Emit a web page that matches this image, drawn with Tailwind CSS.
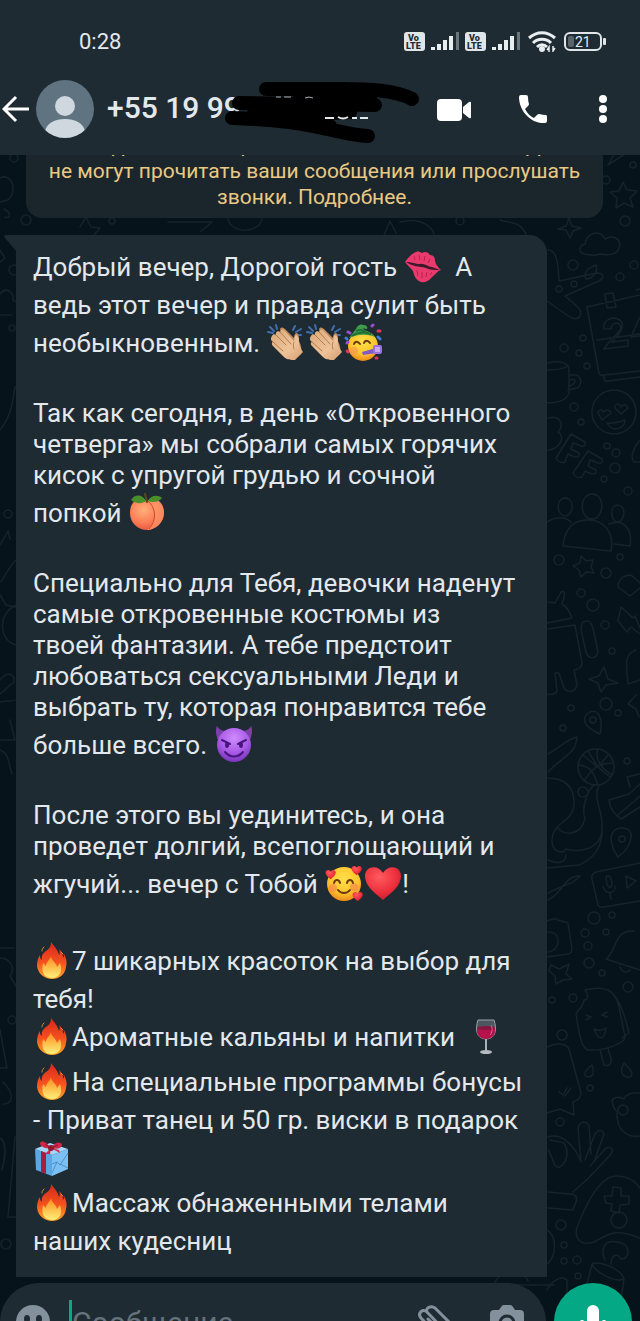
<!DOCTYPE html>
<html lang="ru">
<head>
  <meta charset="UTF-8" />
  <meta name="viewport" content="width=device-width, initial-scale=1.0" />
  <title>Чат</title>
  <script src="https://cdn.jsdelivr.net/npm/@tailwindcss/browser@4"></script>
</head>
<body class="h-screen overflow-hidden flex flex-col bg-[#07131a] text-[#e3e8ec] font-[Roboto,'Noto_Sans',sans-serif]">

  <!-- Emoji -->
  <svg class="absolute w-0 h-0" xmlns="http://www.w3.org/2000/svg">
    <defs>
      <linearGradient id="gFire" x1="0" y1="0" x2="0" y2="1">
        <stop offset="0" stop-color="#d8261c" /><stop offset=".55" stop-color="#f4511e" /><stop offset="1" stop-color="#ffa726" />
      </linearGradient>
      <linearGradient id="gFlame" x1="0" y1="0" x2="0" y2="1">
        <stop offset="0" stop-color="#ff8a1c" /><stop offset="1" stop-color="#fff07a" />
      </linearGradient>
      <radialGradient id="gFace" cx=".5" cy=".35" r=".65">
        <stop offset="0" stop-color="#ffe04a" /><stop offset=".65" stop-color="#fdc52c" /><stop offset="1" stop-color="#ee8a1a" />
      </radialGradient>
      <radialGradient id="gDevil" cx=".5" cy=".3" r=".7">
        <stop offset="0" stop-color="#cf8bff" /><stop offset=".6" stop-color="#a95be6" /><stop offset="1" stop-color="#7a35bd" />
      </radialGradient>
      <radialGradient id="gPeach" cx=".4" cy=".35" r=".7">
        <stop offset="0" stop-color="#ffb07a" /><stop offset=".6" stop-color="#fb7d55" /><stop offset="1" stop-color="#e2543f" />
      </radialGradient>
      <radialGradient id="gHeart" cx=".4" cy=".3" r=".8">
        <stop offset="0" stop-color="#ff5a5f" /><stop offset=".6" stop-color="#ec2f3c" /><stop offset="1" stop-color="#bf1626" />
      </radialGradient>
      <linearGradient id="gHand" x1="0" y1="0" x2="1" y2="1">
        <stop offset="0" stop-color="#d9a878" /><stop offset=".6" stop-color="#efc39a" /><stop offset="1" stop-color="#d69d6e" />
      </linearGradient>
    </defs>

    <symbol id="kiss" viewBox="0 0 39 39">
      <path d="M2 15C5 11 8 7 13 5c2-1 4 0 6 1 3-2 6-1 8 2 4 0 5 3 5 6 1 4 3 6 6 9-4 1-6 5-9 7-3 4-7 6-11 5-5-2-7-6-8-11-2-3-5-5-8-9Z" fill="#e83a6c" />
      <path d="M3 15c6 0 9 2 14 2 4-1 8 3 12 3l8 3c-6 0-10 0-14-2-7-2-13-1-20-6Z" fill="#3c1a2b" />
      <path d="M11 9l1 4M16 8l1 5M22 9l-1 5M27 12l-2 4M14 23l1 6M19 25v6M24 25l-1 5M29 25l-2 3" stroke="#b9204f" stroke-width="1" fill="none" />
    </symbol>

    <symbol id="clap" viewBox="0 0 39 39">
      <path d="M4 4l4 4M2 9l5 1M10 2l1 4M27 7l2-4M30 9l5-3M31 12l4 0" stroke="#3f6fae" stroke-width="2" stroke-linecap="round" fill="none" />
      <path d="M14 6c1-2 3-2 5 0l9 9c0-3 1-5 3-5 2 1 2 5 2 8 2 4 3 8 2 13l-5 4-8-6Z" fill="#c08a5c" />
      <path d="M6 13c1-2 2-2 4-1-1-3 2-5 4-3 1-3 3-3 5-1l9 10c1-3 0-5 2-6 3 1 3 5 3 8 1 4 2 6 4 9l-8 8c-4 0-8 0-11-3L7 23c-2-2-1-4 0-4-2-2-3-3-1-6Z" fill="url(#gHand)" />
      <path d="M10 12l10 10M14 9l11 12M7 19l10 9M28 19c-1 3-1 5 0 7" stroke="#b07d52" stroke-width="1" fill="none" stroke-linecap="round" />
    </symbol>

    <symbol id="party" viewBox="0 0 39 39">
      <circle cx="19" cy="23" r="15" fill="url(#gFace)" />
      <path d="M5 15C8 11 10 9 13 4c2-2 3-3 6-2 3 0 5 1 4 4-2 0-3-1-4 0 4 2 8 4 12 8-8-3-17-3-26 1Z" fill="#3f9a4a" />
      <path d="M8 13c6-4 13-4 19-2M12 8c4-2 7-1 10 1" stroke="#236f37" stroke-width="2" fill="none" />
      <path d="M10 21c1-3 4-3 6 0M20 20c1-3 4-3 6 0" stroke="#6b3a12" stroke-width="2" fill="none" stroke-linecap="round" />
      <circle cx="10" cy="28" r="4" fill="#f59a55" opacity=".7" />
      <path d="M18 29l14-4v5l-13 2Z" fill="#7f5ac8" />
      <rect x="29" y="22" width="9" height="9" rx="2" fill="#9a72dd" />
      <rect x="31" y="24" width="5" height="5" fill="#c7aaf3" />
      <path d="M4 9l2 1M28 3l1-1M4 19l-1 1" stroke="#9b4fd0" stroke-width="3" stroke-linecap="round" />
      <path d="M34 8l2 0M3 28l1 1M32 35l1 0" stroke="#e0365a" stroke-width="3" stroke-linecap="round" />
      <path d="M34 14l2 2M2 15l1 1" stroke="#3d7fd6" stroke-width="3" stroke-linecap="round" />
    </symbol>

    <symbol id="peach" viewBox="0 0 39 39">
      <path d="M19 8c8-5 17 1 17 12 0 9-8 17-17 17S2 30 2 20C2 8 11 3 19 8Z" fill="url(#gPeach)" />
      <path d="M20 8c8 7 9 20-1 29 9 0 17-8 17-17C36 9 28 3 20 8Z" fill="#ff9868" opacity=".7" />
      <path d="M20 8c8 7 9 19 1 28" stroke="#c9472f" stroke-width="1" fill="none" />
      <path d="M18 8C14 1 7 1 3 7c5 4 11 4 15 1ZM20 8c2-5 9-7 14-3-3 4-9 5-14 3Z" fill="#4a8f2b" />
      <path d="M17 1l2 8" stroke="#5a4a20" stroke-width="2" stroke-linecap="round" />
    </symbol>

    <symbol id="devil" viewBox="0 0 39 39">
      <path d="M3 1c2 4 5 4 9 6l-8 8C2 10 1 5 3 1ZM37 1c-2 4-5 4-9 6l8 8c2-5 3-10 1-14Z" fill="#7b3fa8" />
      <circle cx="20" cy="20" r="17" fill="url(#gDevil)" />
      <path d="M8 15l8 4M32 15l-8 4" stroke="#4a1580" stroke-width="2" stroke-linecap="round" />
      <ellipse cx="13" cy="20" rx="2" ry="3" fill="#4a1580" /><ellipse cx="27" cy="20" rx="2" ry="3" fill="#4a1580" />
      <path d="M11 27c5 6 13 6 18 0" stroke="#4a1580" stroke-width="2" fill="none" stroke-linecap="round" />
    </symbol>

    <symbol id="heart" viewBox="0 0 39 39">
      <path d="M20 36C12 29 2 22 2 12 2 2 15 0 20 9 25 0 38 2 38 12c0 10-10 17-18 24Z" fill="url(#gHeart)" />
    </symbol>

    <symbol id="loving" viewBox="0 0 39 39">
      <circle cx="20" cy="20" r="17" fill="url(#gFace)" />
      <circle cx="9" cy="24" r="4" fill="#f68a4a" opacity=".7" /><circle cx="30" cy="23" r="4" fill="#f68a4a" opacity=".7" />
      <path d="M10 19c1-4 5-4 6 0M23 19c1-4 5-4 6 0M14 26c3 4 9 4 12 0" stroke="#6b3a12" stroke-width="2" fill="none" stroke-linecap="round" />
      <use href="#heart" x="1" y="5" width="11" height="11" />
      <use href="#heart" x="27" y="1" width="11" height="11" />
      <use href="#heart" x="28" y="27" width="11" height="11" />
    </symbol>

    <symbol id="fire" viewBox="0 0 39 39">
      <path d="M18 1c3 4 7 8 8 13 1-2 1-4 0-6 4 3 4 7 4 9 1-1 1-3 1-4 3 6 3 9 2 13-1 8-7 12-14 12S5 33 4 25c0-5 1-8 3-11 0 2 0 4 2 5-1-4 1-7 4-9 4-3 5-5 5-9Z" fill="url(#gFire)" />
      <path d="M18 15c0 4 5 6 6 11l3-4c3 8 0 15-8 15S8 31 10 22l3 3c0-4 4-6 5-10Z" fill="url(#gFlame)" />
      <path d="M11 6c-2 2-2 3-2 4M28 11l2 2" stroke="#e08a1e" stroke-width="1" stroke-linecap="round" fill="none" />
    </symbol>

    <symbol id="wine" viewBox="0 0 39 39">
      <path d="M17 3h16c3 9 2 19-8 19S14 12 17 3Z" fill="#4d565e" stroke="#9aa3aa" />
      <path d="M16 11h18c1 7-3 11-9 11s-10-4-9-11Z" fill="#b3134a" />
      <ellipse cx="25" cy="11" rx="9" ry="2" fill="#8a1440" />
      <path d="M30 8c2 4 1 8-1 10" stroke="#e4668d" fill="none" />
      <path d="M25 22v12" stroke="#a9b1b7" stroke-width="2" />
      <ellipse cx="25" cy="35" rx="6" ry="2" fill="#b5bcc1" />
    </symbol>

    <symbol id="gift" viewBox="0 0 39 39">
      <path d="M2 11l17 6v21L3 32Z" fill="#5aa7e4" />
      <path d="M19 17l16-6v20l-16 7Z" fill="#7cc0f3" />
      <path d="M2 11L17 5l18 6-16 6Z" fill="#a5d6fa" />
      <path d="M8 13l5 2v21l-5-2Z" fill="#a81f3d" />
      <path d="M19 26l5-2 3 3 8-12M24 24l-5 11M27 26l8 4" stroke="#4c93cd" fill="none" />
      <path d="M18 10C13 3 8 2 7 5c0 4 6 6 11 5Zm0 0c4-6 10-7 11-3 0 3-6 5-11 3Zm0 0l-6 6 5 0Zm0 0l9 5-1-3Z" fill="#cf2746" />
      <circle cx="18" cy="10" r="3" fill="#8f1730" />
      <path d="M12 6l4 3M25 7l-5 2" stroke="#8f1730" />
    </symbol>
  </svg>

  <!-- Header -->
  <header class="relative z-10 shrink-0 bg-[#1f2b33] pb-[17px]">
    <div class="flex items-center h-20 pt-0.5 pl-[79px] pr-[34px]">
      <span class="flex-1 text-[22px]">0:28</span>
      <div class="flex items-center gap-1.5">
        <svg class="w-[21px] h-[19px]" viewBox="0 0 21 19">
          <rect width="21" height="19" rx="3" fill="#dfe5e9" />
          <text x="4" y="9" font-size="9" font-weight="900" fill="#1f2b33">Vo</text>
          <text x="2" y="17" font-size="9" font-weight="900" fill="#1f2b33">LTE</text>
        </svg>
        <svg class="w-7 h-[19px]" viewBox="0 0 28 19">
          <path d="M0 15h4v3H0ZM6 12h4v6H6ZM12 8h4v10h-4ZM18 4h4v14h-4Z" fill="#e8edf0" />
          <path d="M25 0h3v18h-3Z" fill="#6b757c" />
        </svg>
        <svg class="w-[21px] h-[19px]" viewBox="0 0 21 19">
          <rect width="21" height="19" rx="3" fill="#dfe5e9" />
          <text x="4" y="9" font-size="9" font-weight="900" fill="#1f2b33">Vo</text>
          <text x="2" y="17" font-size="9" font-weight="900" fill="#1f2b33">LTE</text>
        </svg>
        <svg class="w-7 h-[19px]" viewBox="0 0 28 19">
          <path d="M0 15h4v3H0ZM6 12h4v6H6ZM12 8h4v10h-4ZM18 4h4v14h-4Z" fill="#e8edf0" />
          <path d="M25 0h3v18h-3Z" fill="#6b757c" />
        </svg>
        <svg class="ml-0.5 w-7 h-[21px]" viewBox="0 0 28 21" fill="none" stroke="#e8edf0" stroke-width="3">
          <path d="M1 7c8-7 18-7 26 0M5 12c5-5 13-5 18 0M9 16c3-3 7-3 10 0" />
          <circle cx="14" cy="18" r="3" fill="#e8edf0" stroke="none" />
          <path d="M21 21v-5l-2 3M25 15v5l2-3" stroke-width="1.5" />
        </svg>
        <svg class="ml-0.5 w-[42px] h-[19px]" viewBox="0 0 42 19">
          <rect x="1" y="1" width="36" height="17" rx="5" fill="none" stroke="#dfe5e9" stroke-width="2" />
          <rect x="4" y="4" width="6" height="11" rx="2" fill="#59646b" />
          <rect x="39" y="6" width="3" height="7" rx="1" fill="#dfe5e9" />
          <text x="11" y="15" font-size="14" fill="#e8edf0">21</text>
        </svg>
      </div>
    </div>

    <div class="flex items-center pr-[29px]">
      <button class="w-9 pl-0.5" aria-label="Назад">
        <svg class="w-7 h-7" viewBox="0 0 28 28" fill="none" stroke="#fff" stroke-width="3"><path d="M14 2L2 14l12 12M2 14h25" /></svg>
      </button>
      <svg class="w-[58px] h-[58px]" viewBox="0 0 58 58">
        <clipPath id="round"><circle cx="29" cy="29" r="29" /></clipPath>
        <g clip-path="url(#round)">
          <rect width="58" height="58" fill="#5f7380" />
          <circle cx="29" cy="26" r="10" fill="#cfd8de" />
          <path d="M9 52c1-9 10-13 20-13s19 4 20 13l-6 8H15Z" fill="#cfd8de" />
        </g>
      </svg>
      <h1 class="flex-1 pl-[13px] pb-1 text-[30px] font-medium whitespace-nowrap">+55 19 99</h1>
      <div class="flex items-center gap-11 text-white">
        <button class="w-9" aria-label="Видеозвонок">
          <svg class="w-9 h-9" viewBox="0 0 36 36" fill="currentColor"><rect x="2" y="8" width="25" height="22" rx="4" /><path d="M28 16l6-5q2-1 2 1v14q0 2-2 1l-6-5Z" /></svg>
        </button>
        <button class="w-9" aria-label="Позвонить">
          <svg class="w-9 h-9" viewBox="0 0 36 36" fill="currentColor"><path d="M6 4h5q2 0 2 2 0 4 1 7 0 1-1 2l-3 3c3 5 5 7 9 9l3-3q1-1 2-1 4 1 7 1 1 0 1 2v4q0 2-2 2C16 33 4 20 4 6q0-2 2-2Z" /></svg>
        </button>
        <button class="w-4" aria-label="Меню">
          <svg class="w-4 h-9" viewBox="0 0 16 36" fill="currentColor"><circle cx="8" cy="8" r="4" /><circle cx="8" cy="18" r="4" /><circle cx="8" cy="28" r="4" /></svg>
        </button>
      </div>
    </div>

    <!-- Marker strokes over the number -->
    <svg class="absolute left-[220px] top-20 w-[204px] h-[66px]" viewBox="220 80 204 66" fill="none" stroke="#000" stroke-width="14" stroke-linecap="round" stroke-linejoin="round">
      <path d="M266 89H340C370 89 395 90 412 99" />
      <path d="M239 103C290 104 330 104 375 105M254 110L330 110M300 98L370 98" />
      <path d="M232 118C260 119 290 121 318 127 335 130 350 135 368 136M270 116L350 112M310 122L330 126" />
      <path d="M276 97h5M284 97h7M305 98q4-2 8 0" stroke="#aab1b6" stroke-width="1" stroke-linecap="butt" />
      <path d="M325 118h9M338 117q5 3 10 0M352 118h5M360 118h8" stroke="#e3e8ec" stroke-width="2" stroke-linecap="butt" />
    </svg>
  </header>

  <!-- Wallpaper -->
  <svg class="absolute inset-0 w-full h-full" viewBox="0 0 640 1321" preserveAspectRatio="xMaxYMin slice" fill="none" stroke="#17232a" stroke-width="1.5" stroke-linejoin="round" stroke-linecap="round">
    <!-- right edge -->
    <path d="M608 165l8-14 18-3-26 17M623 182l4 8 10 1-7 7 3 9-9-4-8 5 1-10-7-6 9-1ZM569 218l3 8 9 2-8 3-3 7-4-8-8-1 8-3ZM584 254c-6-2-5-9 1-10 2-12 15-15 20-5 8-5 17 0 14 9-2 8-14 7-19 6-6 2-12 1-16 0Z" />
    <path d="M548 250c6 0 10 5 11 31l38-8c8 0 7 5 2 8l-34 15c12 10 18 14 15 20-3 5-9 2-13-1l-20-14M586 279c-3-6 2-11 10-14 2 7-2 13-10 14Z" />
    <path d="M587 307l53-12M587 307l12 66q1 3 5 2l36-4M597 340l43-6M604 376q-1 6 4 5l32-4M605 294l8-1 3 14-9 1ZM636 290l4-1M604 329c-2-7 6-13 14-10 8 4 5 12-6 23l16-2v6l-24 3c8-13 20-18 16-24-3-4-8-2-9 4ZM640 317l-9 20 9-1" />
    <path d="M547 363c14-3 21 0 22 6v24c-3 8-12 10-22 10M547 370c12 0 18-2 21-4M569 376c12-5 15 8 8 12l-9 2M570 380c6-3 7 3 0 6" />
    <circle cx="614" cy="412" r="22" /><path d="M598 413c1-4 4-4 5-1 3-3 7-2 8 1l-9 7ZM615 408c0-5 4-5 6-1 3-4 6-2 7 1l-7 6ZM607 423c6 1 12-1 18-3 0 10-14 12-18 3Z" />
    <path d="M548 418c12-3 17 6 10 14 8 4 2 17-10 18M571 434l14 8c1 4-2 6-6 3l-6-2-2 6 8 4c1 4-2 6-11 1l-3 8c-5 2-8-2-9-4ZM588 451l14 8c1 4-2 6-6 3l-6-2-2 6 8 4c1 4-2 6-11 1l-3 6c-5 2-8-2-9-4ZM640 440c-7 8-10 18-6 22h6" />
    <path d="M592 494c14 0 12 25 0 25s-14-24 0-25ZM565 498c11 1 8 18 0 18s-10-17 0-18ZM617 505c10 0 8 16 1 17s-9-16-1-17ZM547 522c10-6 18-5 24 0M563 546c2-22 14-26 26-26s26 10 22 31ZM609 524c14-6 24 5 21 22l-16-2" />
    <path d="M581 556l5 5 7-1-2 7 3 6-8-1-5 5-2-7-6-4 7-3ZM548 602l7 1 6-11c5-2 4 3 1 12 5 3 8 8 10 14l-25 5M548 629l27-4 7 38q0 6-8 7l3 15c-2 9-12 8-14 0l-4-12h-4l2 18q-3 5-10 3M582 623c5-4 9-2 11 5l5 24c-2 8-10 7-12 0l-5-22Z" />
    <path d="M618 587c0-8 6-12 13-12l9 8M618 587l12 9 10-8M621 607l12 11 2-2 5 12M621 607l-3 14 9 11 4-5 9 7M636 650c-12 4-10 14-8 34l12-4" />
    <path d="M604 667l4 12 10 4-12 2-5 7-3-9-9-4 10-3ZM636 695l-8 9 8 5 3 8M600 734c-12-5-20-13-13-20 10-8 17 3 13 20Z" />
    <circle cx="596" cy="767" r="18" /><path d="M583 755c10 8 20 16 27 22M578 765c14 1 16 10 20 20M614 763c-20 0-24 10-30 18M598 749c-4 10 4 20 14 26M588 751l10 16 10-12" />
    <path d="M548 772c16-17 28-18 29-35-10 2-16 10-29 17M547 778c20 0 27 10 27 25 0 20-22 18-22 38 0 10 10 14 14 8 14 4 34 0 36-18 2-22-10-30-3-46-10-4-18 22-14 34-4 16-20 18-28 8M548 860c14 6 18 0 18-5M547 868l32-3c20-8 24-26 23-38M548 893c20-10 24-8 32-17-14-2-20 20-32 24" />
    <path d="M609 800l20-6 11-10M609 800c1 10 6 14 12 19l19-12M617 816l23-20M627 777l13-3M627 777l3 10M618 857c-10-15-9-28 3-29 16-1 12 18-3 29ZM592 879q-1-5 4-7l44-9M592 879l6 26q2 3 6 2l36-6M607 876c4-2 6 8 4 11-4 2-6-9-4-11ZM603 887c4 9 13 6 12-1M610 894l1 5M626 876l10 5-9 7Z" />
    <path d="M547 921q10-4 11-1l10 3 4 26q0 4-4 5l-21 3M548 932c14-1 13 19 0 20M551 965l8 4 10-5-3 10 6 5-9 1-7 4-1-8-6-5ZM606 959c11-8 8-30 28-28M606 959l34 11M620 967c2 6 8 6 10 3" />
    <path d="M585 990c18-4 30-2 34 17l6 30c0 6-20 14-36 13-8 0-10-18-13-36 4-8 6-4 8-14 5 0 4-6 1-10ZM608 990c12 6 18 30 21 43l-7 5M600 1050l4 15c5 2 8-2 7-6l-3-11M586 1015l5 2-5 3M607 1012l-5 3 5 2M594 1029c5 2 8 2 12-1-2 14-8 12-12 1M592 1065c-10 8-8 12-3 12 5-1 5-6 3-12ZM624 1063c-6 10 0 15 6 14 5-3-1-9-6-14Z" />
    <path d="M547 1047c12-6 20-2 22 2l12 44q0 6-8 9l1 13-14-6-13 4M559 1092l4 3 4-7M565 1096l6-8M640 1093c-10-1-14 2-16 6-5-3-11-2-12 2 1 6 3 9 5 11-1 18 10 26 23 24" /><circle cx="623" cy="1110" r="5" />
    <path d="M548 1137c12-4 26 6 33 25M581 1162l-3-34c2-8 8-7 11-2l2 28M585 1160l10-26c4-6 8-3 9 0l-10 28M590 1166l16-18c6-2 8 2 5 6-20 22-22 24-38 38M548 1192l22 2c6 0 8 4 6 8l-3 8-25-2M550 1140l14 3c6 10 2 20-4 24-8 2-6-10-12-17" />
    <path d="M580 1220c10-24 22-44 36-44 12 0 20 6 24 12M580 1220c-10 20 2 26 14 22 16-8 20-14 46-4M613 1187l8 1v8h8v8l-9 1-1 8-8-2 1-7-6-1-2-7h8Z" /><circle cx="619" cy="1220" r="8" />
    <path d="M605 1260c-6-14 2-20 12-18 16 2 12 18 4 17-5-8-10-2-10 5M592 1264c8-4 30 6 32 15-10 4-30-8-32-15l-5 20M624 1279l-3 20M547 1290c5-10 15-15 20-10v16M547 1230c10 6 10 26 0 34" />
    <!-- left edge -->
    <path d="M0 178c12-6 18 14 8 22l-8 2M4 209c8 4 6 10 1 8M0 250l5 8-5 4M0 294c6-8 14-2 13 6l3 2M0 315h12M0 430c16-20 12-40 16-44M0 545l8-14 2 8M0 595l6 10 10 2M16 560c-10 10-12 20-16 22M16 605c-20 10-16 36 0 40M0 680c10-12 16-2 14 2L0 694M0 702c8-2 12 0 15-2M10 720l5 20H0M0 750c10 4 8 14 12 24M0 948h14M0 958c10 0 16 10 10 18l6 10M0 1030l7 38H0M3 1082c12 12 10 22 0 22M0 1138c8 4 4 24 2 32M15 1137l-7 80h8" />
    <path d="M80 227l6-10 5 10 9 1-6 7M168 222h44l-12 10M228 219c2 14 30 16 34 0M384 235l6-14 6 12M400 222c14-4 30 0 34 12M500 220c14 4 20 2 26 14M554 1285h-60c4-16 30-16 34-4" />
    <!-- bubbles -->
    <g>
      <circle cx="14" cy="158" r="4" /><circle cx="26" cy="220" r="5" /><circle cx="112" cy="221" r="3" /><circle cx="460" cy="221" r="4" />
      <circle cx="633" cy="165" r="3" /><circle cx="606" cy="180" r="4" /><circle cx="625" cy="221" r="5" /><circle cx="573" cy="265" r="5" /><circle cx="620" cy="277" r="4" /><circle cx="634" cy="265" r="4" />
      <circle cx="559" cy="289" r="3" /><circle cx="574" cy="284" r="3" /><circle cx="583" cy="338" r="3" /><circle cx="564" cy="348" r="4" /><circle cx="579" cy="353" r="3" /><circle cx="587" cy="366" r="3" />
      <circle cx="574" cy="407" r="4" /><circle cx="581" cy="422" r="3" /><circle cx="607" cy="446" r="3" /><circle cx="616" cy="453" r="4" /><circle cx="615" cy="468" r="5" /><circle cx="604" cy="479" r="3" /><circle cx="628" cy="491" r="4" />
      <circle cx="559" cy="560" r="5" /><circle cx="606" cy="573" r="5" /><circle cx="620" cy="557" r="3" /><circle cx="581" cy="593" r="4" /><circle cx="593" cy="605" r="6" /><circle cx="605" cy="625" r="4" /><circle cx="612" cy="651" r="3" />
      <circle cx="606" cy="704" r="6" /><circle cx="571" cy="708" r="3" /><circle cx="593" cy="720" r="3" /><circle cx="618" cy="713" r="3" /><circle cx="563" cy="728" r="3" /><circle cx="627" cy="761" r="3" /><circle cx="583" cy="792" r="5" /><circle cx="622" cy="839" r="3" />
      <circle cx="594" cy="918" r="6" /><circle cx="612" cy="915" r="3" /><circle cx="585" cy="933" r="4" /><circle cx="606" cy="932" r="3" /><circle cx="588" cy="946" r="4" /><circle cx="589" cy="963" r="5" /><circle cx="602" cy="973" r="3" />
      <circle cx="628" cy="987" r="5" /><circle cx="573" cy="998" r="4" /><circle cx="552" cy="1000" r="3" /><circle cx="562" cy="1035" r="5" /><circle cx="590" cy="1088" r="3" /><circle cx="560" cy="1122" r="4" />
      <circle cx="561" cy="1225" r="5" /><circle cx="564" cy="1245" r="3" /><circle cx="577" cy="1260" r="4" /><circle cx="564" cy="1261" r="3" /><circle cx="578" cy="1276" r="3" />
      <circle cx="8" cy="514" r="4" /><circle cx="12" cy="1020" r="4" /><circle cx="12" cy="328" r="3" /><circle cx="6" cy="1244" r="5" /><circle cx="14" cy="270" r="5" />
    </g>
  </svg>

  <!-- Messages -->
  <main class="relative flex-none overflow-hidden">
    <p class="-mt-[23px] ml-[26px] mr-[37px] rounded-b-2xl bg-[#1b262c] pb-2 text-center text-[21px] leading-[26px] whitespace-nowrap text-[#e9c983]">
      шифрованием. Третьи лица, включая WhatsApp,<br>
      не могут прочитать ваши сообщения или прослушать<br>
      звонки. <a href="#">Подробнее.</a>
    </p>

    <article class="relative mt-[17px] ml-4 mr-[93px] rounded-tr-[18px] bg-[#1f2b33] pt-2.5 pb-5 pl-[17px] flex flex-col gap-8 text-[26px] leading-[31px] whitespace-nowrap">
      <svg class="absolute top-0 -left-3 w-3 h-4" viewBox="0 0 12 16"><path d="M12 0H2Q-1 0 1 3L12 16Z" fill="#1f2b33" /></svg>
      <p>
        <span class="block leading-[45px]">Добрый вечер, Дорогой гость <svg class="inline w-[39px] h-[39px] align-[-10px]"><use href="#kiss" /></svg>&nbsp; А</span>
        <span class="block">ведь этот вечер и правда сулит быть</span>
        <span class="block leading-[45px]">необыкновенным. <svg class="inline w-[39px] h-[39px] align-[-10px]"><use href="#clap" /></svg><svg class="inline w-[39px] h-[39px] align-[-10px]"><use href="#clap" /></svg><svg class="inline w-[39px] h-[39px] align-[-10px]"><use href="#party" /></svg></span>
      </p>
      <p>
        <span class="block">Так как сегодня, в день «Откровенного</span>
        <span class="block">четверга» мы собрали самых горячих</span>
        <span class="block">кисок с упругой грудью и сочной</span>
        <span class="block leading-[45px]">попкой <svg class="inline w-[39px] h-[39px] align-[-10px]"><use href="#peach" /></svg></span>
      </p>
      <p>
        <span class="block">Специально для Тебя, девочки наденут</span>
        <span class="block">самые откровенные костюмы из</span>
        <span class="block">твоей фантазии. А тебе предстоит</span>
        <span class="block">любоваться сексуальными Леди и</span>
        <span class="block">выбрать ту, которая понравится тебе</span>
        <span class="block leading-[45px]">больше всего. <svg class="inline w-[39px] h-[39px] align-[-10px]"><use href="#devil" /></svg></span>
      </p>
      <p>
        <span class="block">После этого вы уединитесь, и она</span>
        <span class="block">проведет долгий, всепоглощающий и</span>
        <span class="block leading-[45px]">жгучий... вечер с Тобой <svg class="inline w-[39px] h-[39px] align-[-10px]"><use href="#loving" /></svg><svg class="inline w-[39px] h-[39px] align-[-10px]"><use href="#heart" /></svg>!</span>
      </p>
      <p>
        <span class="block leading-[45px]"><svg class="inline w-[39px] h-[39px] align-[-10px]"><use href="#fire" /></svg>7 шикарных красоток на выбор для</span>
        <span class="block">тебя!</span>
        <span class="block leading-[45px]"><svg class="inline w-[39px] h-[39px] align-[-10px]"><use href="#fire" /></svg>Ароматные кальяны и напитки <svg class="inline w-[39px] h-[39px] align-[-10px]"><use href="#wine" /></svg></span>
        <span class="block leading-[45px]"><svg class="inline w-[39px] h-[39px] align-[-10px]"><use href="#fire" /></svg>На специальные программы бонусы</span>
        <span class="block">- Приват танец и 50 гр. виски в подарок</span>
        <span class="block leading-[45px]"><svg class="inline w-[39px] h-[39px] align-[-10px]"><use href="#gift" /></svg></span>
        <span class="block leading-[45px]"><svg class="inline w-[39px] h-[39px] align-[-10px]"><use href="#fire" /></svg>Массаж обнаженными телами</span>
        <span class="block">наших кудесниц</span>
      </p>
    </article>
  </main>

  <!-- Input bar -->
  <footer class="relative shrink-0 mt-1.5 pr-2 flex items-center gap-2">
    <div class="flex-1 min-w-0 h-[78px] rounded-full bg-[#1f2b33] pl-4 pr-[22px] flex items-center text-[#82919b]">
      <button aria-label="Эмодзи">
        <svg class="w-[34px] h-[34px]" viewBox="0 0 34 34"><circle cx="17" cy="17" r="17" fill="currentColor" /><g fill="#1f2b33"><ellipse cx="11" cy="14" rx="3" ry="4" /><ellipse cx="23" cy="14" rx="3" ry="4" /><path d="M8 21h18c-2 8-16 8-18 0Z" /></g></svg>
      </button>
      <span class="ml-[19px] w-[3px] h-11 bg-[#0ba884]"></span>
      <input type="text" aria-label="Сообщение" placeholder="Сообщение" class="flex-1 min-w-0 bg-transparent text-[30px] outline-none placeholder:text-[#64727b]" />
      <button class="mr-9" aria-label="Прикрепить">
        <svg class="w-9 h-9" viewBox="0 0 36 36" fill="none" stroke="currentColor" stroke-width="3" stroke-linecap="round"><path d="M17 4l17 17M26 26L9 8c-4-4-10 1-6 6l18 19M22 27L10 15M9 8c-2-4 4-7 8-4" /></svg>
      </button>
      <button aria-label="Камера">
        <svg class="w-[34px] h-[34px]" viewBox="0 0 34 34"><path d="M11 2q1-2 3-2h6q2 0 3 2l2 3h5q4 0 4 4v17q0 4-4 4H4q-4 0-4-4V9q0-4 4-4h5Z" fill="currentColor" /><circle cx="17" cy="18" r="7" fill="none" stroke="#1f2b33" stroke-width="3" /></svg>
      </button>
    </div>
    <button class="w-[78px] h-[78px] shrink-0 rounded-full bg-[#05a884] flex items-center justify-center" aria-label="Голосовое сообщение">
      <svg class="w-9 h-9" viewBox="0 0 36 36"><rect x="12" y="1" width="12" height="22" rx="6" fill="#fff" /><path d="M7 16c0 16 22 16 22 0M18 28v7" fill="none" stroke="#fff" stroke-width="3" /></svg>
    </button>
  </footer>
</body>
</html>
